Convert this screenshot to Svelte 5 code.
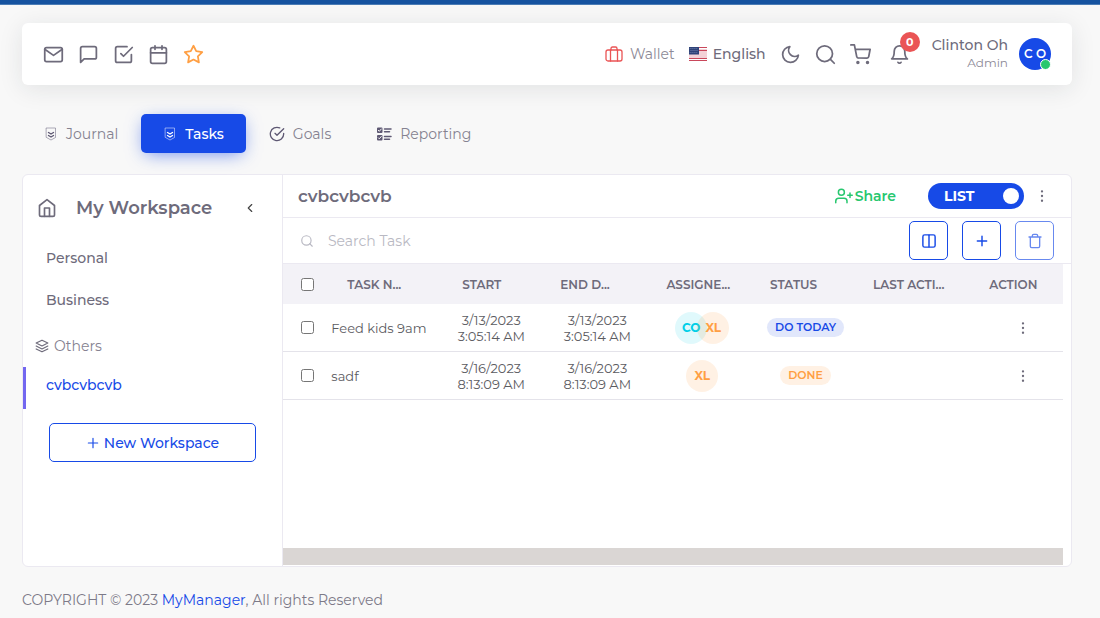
<script>
  let query = $state('');
  let listView = $state(true);

  const tasks = [
    {
      name: 'Feed kids 9am',
      start: ['3/13/2023', '3:05:14 AM'],
      end: ['3/13/2023', '3:05:14 AM'],
      people: [{ initials: 'CO', tone: 'cyan' }, { initials: 'XL', tone: 'orange' }],
      status: 'DO TODAY',
      tone: 'blue'
    },
    {
      name: 'sadf',
      start: ['3/16/2023', '8:13:09 AM'],
      end: ['3/16/2023', '8:13:09 AM'],
      people: [{ initials: 'XL', tone: 'orange' }],
      status: 'DONE',
      tone: 'orange'
    }
  ];
</script>

{#snippet dots()}
  <svg class="i14" viewBox="0 0 24 24"><circle cx="12" cy="12" r="1" /><circle cx="12" cy="4" r="1" /><circle cx="12" cy="20" r="1" /></svg>
{/snippet}

{#snippet badge()}
  <svg class="i14" viewBox="0 0 14 14" stroke-width="1">
    <path d="M2.500 1h9v9.500L7 13l-4.500-2.500z" opacity=".5" />
    <path d="M4.500 5.500 7 7l2.500-1.500M4.500 8.500 7 10l2.500-1.500" stroke-width="1.400" />
  </svg>
{/snippet}

<div class="strip"></div>
<div class="page">
  <header class="navbar">
    <nav class="shortcuts" aria-label="Shortcuts">
      <a href="#mail" aria-label="Email"><svg class="i21" viewBox="0 0 24 24"><path d="M4 4h16c1.100 0 2 .9 2 2v12c0 1.100-.9 2-2 2H4c-1.100 0-2-.9-2-2V6c0-1.100.9-2 2-2z" /><path d="m22 6-10 7L2 6" /></svg></a>
      <a href="#chat" aria-label="Chat"><svg class="i21" viewBox="0 0 24 24"><path d="M21 15a2 2 0 0 1-2 2H7l-4 4V5a2 2 0 0 1 2-2h14a2 2 0 0 1 2 2z" /></svg></a>
      <a href="#todo" aria-label="Todo"><svg class="i21" viewBox="0 0 24 24"><path d="m9 11 3 3L22 4" /><path d="M21 12v7a2 2 0 0 1-2 2H5a2 2 0 0 1-2-2V5a2 2 0 0 1 2-2h11" /></svg></a>
      <a href="#calendar" aria-label="Calendar"><svg class="i21" viewBox="0 0 24 24"><rect x="3" y="4" width="18" height="18" rx="2" /><path d="M16 2v4M8 2v4M3 10h18" /></svg></a>
      <a href="#starred" aria-label="Starred" class="star"><svg class="i21" viewBox="0 0 24 24"><path d="m12 2 3.090 6.260L22 9.270l-5 4.870 1.180 6.880L12 17.770l-6.180 3.250L7 14.140 2 9.270l6.910-1.010z" /></svg></a>
    </nav>
    <div class="tools">
      <a href="#wallet" class="wallet">
        <svg class="i18" viewBox="0 0 18 18" stroke-width="1.300"><rect x="1" y="5" width="16" height="11" rx="2" /><path d="M5.500 16V5M12.500 16V5M6 5V3.500C6 2.500 6.500 2 7.500 2h3c1 0 1.500.5 1.500 1.500V5" /></svg>
        <span>Wallet</span>
      </a>
      <button class="language">
        <svg class="flag" viewBox="0 0 18 14">
          <path fill="#f3d3d8" d="M0 0h18v14H0z" />
          <path fill="#c9485b" d="M10 0h8v1h-8zM0 13h18v1H0zM0 11h18v1H0zM10 3h8v1h-8z" />
          <path fill="#fff" d="M0 12h18v1H0zM10 1h8v1h-8z" />
          <path fill="#2f4379" d="M0 0h10v7.500H0z" />
          <path stroke="#6d7ca8" stroke-width=".6" stroke-dasharray="1 1" d="M1 1.500h8M1.500 3.500h8M1 5.500h8" />
        </svg>
        <span>English</span>
      </button>
      <button aria-label="Dark mode"><svg class="i21" viewBox="0 0 24 24"><path d="M21 12.790A9 9 0 1 1 11.210 3 7 7 0 0 0 21 12.790z" /></svg></button>
      <button aria-label="Search"><svg class="i21" viewBox="0 0 24 24"><circle cx="11" cy="11" r="9" /><path d="m22 22-4.350-4.350" /></svg></button>
      <button aria-label="Cart"><svg class="i21" viewBox="0 0 24 24"><circle cx="9" cy="21" r="1" /><circle cx="20" cy="21" r="1" /><path d="M1 1h4l2.680 13.390a2 2 0 0 0 2 1.610h9.720a2 2 0 0 0 2-1.610L23 6H6" /></svg></button>
      <button aria-label="Notifications" class="bell">
        <svg class="i21" viewBox="0 0 24 24"><path d="M18 8A6 6 0 0 0 6 8c0 7-3 9-3 9h18s-3-2-3-9M13.730 21a2 2 0 0 1-3.460 0" /></svg>
        <span class="count">0</span>
      </button>
      <a href="#profile" class="profile">
        <span class="who"><span class="name">Clinton Oh</span><small>Admin</small></span>
        <span class="avatar">C O<i></i></span>
      </a>
    </div>
  </header>

  <nav class="tabs" aria-label="Sections">
    <a href="#journal">{@render badge()}Journal</a>
    <a href="#tasks" class="active" aria-current="page">{@render badge()}Tasks</a>
    <a href="#goals"><svg class="i16" viewBox="0 0 24 24"><path d="M22 11.080V12a10 10 0 1 1-5.930-9.140" /><path d="M22 4 12 14.010l-3-3" /></svg>Goals</a>
    <a href="#reporting">
      <svg class="i16" viewBox="0 0 16 16" stroke-width="1.500">
        <path fill="currentColor" stroke="none" d="M2 1.500h3.500a1 1 0 0 1 1 1V6a1 1 0 0 1-1 1H2a1 1 0 0 1-1-1V2.500a1 1 0 0 1 1-1zM2 9h3.500a1 1 0 0 1 1 1v3.500a1 1 0 0 1-1 1H2a1 1 0 0 1-1-1V10a1 1 0 0 1 1-1z" />
        <path stroke="#f8f8f8" stroke-width="1" d="m2.300 4.300 1 1 2-2.300M2.300 11.800l1 1 2-2.300" />
        <path d="M8.500 3H15M8.500 5.800h5M8.500 10.500H15M8.500 13.300h5" />
      </svg>Reporting
    </a>
  </nav>

  <main class="panel">
    <aside>
      <div class="side-head">
        <svg class="i20" viewBox="0 0 24 24"><path d="m3 9 9-7 9 7v11a2 2 0 0 1-2 2H5a2 2 0 0 1-2-2z" /><path d="M9 22V12h6v10" /></svg>
        <h2>My Workspace</h2>
        <button aria-label="Collapse sidebar"><svg class="i14" viewBox="0 0 24 24"><path d="m15 18-6-6 6-6" /></svg></button>
      </div>
      <a class="space" href="#personal">Personal</a>
      <a class="space" href="#business">Business</a>
      <div class="group">
        <svg class="i14" viewBox="0 0 24 24"><path d="M12 2 2 7l10 5 10-5zM2 17l10 5 10-5M2 12l10 5 10-5" /></svg>
        Others
      </div>
      <a class="space current" href="#cvbcvbcvb">cvbcvbcvb</a>
      <button class="new"><svg class="i14" viewBox="0 0 24 24"><path d="M12 4v16M4 12h16" /></svg>New Workspace</button>
    </aside>

    <section>
      <div class="title-row">
        <h1>cvbcvbcvb</h1>
        <button class="share">
          <svg class="i18" viewBox="0 0 24 24"><path d="M16 21v-2a4 4 0 0 0-4-4H5a4 4 0 0 0-4 4v2" /><circle cx="8.500" cy="7" r="4" /><path d="M20 8v6M23 11h-6" /></svg>Share
        </button>
        <label class="switch"><input type="checkbox" bind:checked={listView} /><span>LIST</span></label>
        <button aria-label="Workspace menu">{@render dots()}</button>
      </div>

      <div class="search-row">
        <label for="task-search" aria-label="Search Task"><svg class="i14" viewBox="0 0 24 24"><circle cx="11" cy="11" r="8" /><path d="m21 21-4.350-4.350" /></svg></label>
        <input id="task-search" type="text" placeholder="Search Task" bind:value={query} />
        <button class="square" aria-label="Columns"><svg class="i14" viewBox="0 0 24 24" stroke-width="2.500"><rect x="1.500" y="1.500" width="21" height="21" rx="3" /><path d="M12 2v20" /></svg></button>
        <button class="square" aria-label="Add task"><svg class="i14" viewBox="0 0 24 24" stroke-width="2.500"><path d="M12 4v16M4 12h16" /></svg></button>
        <button class="square" aria-label="Delete" disabled><svg class="i16" viewBox="0 0 24 24"><path d="M3 6h18M19 6v14a2 2 0 0 1-2 2H7a2 2 0 0 1-2-2V6M8 6V4a2 2 0 0 1 2-2h4a2 2 0 0 1 2 2v2" /></svg></button>
      </div>

      <div class="sheet">
        <table>
          <thead>
            <tr>
              <th class="pick"><input type="checkbox" aria-label="Select all" /></th>
              <th class="task">TASK N...</th>
              <th class="date start">START</th>
              <th class="date">END D...</th>
              <th class="people">ASSIGNE...</th>
              <th class="status">STATUS</th>
              <th class="last">LAST ACTI...</th>
              <th class="action">ACTION</th>
            </tr>
          </thead>
          <tbody>
            {#each tasks as task}
              <tr>
                <td class="pick"><input type="checkbox" aria-label={task.name} /></td>
                <td class="task">{task.name}</td>
                <td>{task.start[0]}<br />{task.start[1]}</td>
                <td>{task.end[0]}<br />{task.end[1]}</td>
                <td>
                  <div class="stack">
                    {#each task.people as person}<span class="person {person.tone}">{person.initials}</span>{/each}
                  </div>
                </td>
                <td><span class="pill {task.tone}">{task.status}</span></td>
                <td></td>
                <td class="action"><button aria-label="Task menu">{@render dots()}</button></td>
              </tr>
            {/each}
          </tbody>
        </table>
        <div class="track"></div>
      </div>
    </section>
  </main>

  <footer>COPYRIGHT © 2023 <a href="#home">MyManager</a>, All rights Reserved</footer>
</div>

<style>
  :global(body) {
    margin: 0;
    background: #f8f8f8;
    color: #6e6b7b;
    font: 14px/20px Montserrat, Inter, sans-serif;
  }
  * { box-sizing: border-box; }
  a { color: inherit; text-decoration: none; }
  button { padding: 0; border: 0; background: none; color: inherit; font: inherit; cursor: pointer; display: inline-flex; align-items: center; justify-content: center; }
  svg { display: block; flex: none; fill: none; stroke: currentColor; stroke-linecap: round; stroke-linejoin: round; }
  svg:not([stroke-width]) { stroke-width: 2; }
  .i14 { width: 14px; height: 14px; }
  .i16 { width: 16px; height: 16px; }
  .i18 { width: 18px; height: 18px; }
  .i20 { width: 20px; height: 20px; }
  .i21 { width: 21px; height: 21px; }

  .strip { height: 5px; background: #1653a0; border-bottom: 1px solid #4b7cb5; }
  .page { padding: 18px 28px 8px 22px; }

  .navbar { display: flex; align-items: center; justify-content: space-between; height: 62px; padding: 0 21px; border-radius: 6px; background: #fff; box-shadow: 0 4px 24px rgba(34, 41, 47, 0.1); }
  .shortcuts { display: flex; gap: 14px; }
  .star { color: #ff9f43; }
  .tools { display: flex; align-items: center; gap: 14px; }
  .wallet, .language { display: flex; align-items: center; gap: 6px; }
  .wallet { gap: 7px; }
  .wallet svg { color: #ea5455; }
  .wallet span { color: #8d8a97; }
  .language, .name { font-weight: 500; }
  .flag { width: 18px; height: 14px; stroke: none; }
  .bell { position: relative; margin-left: 4px; }
  .count { position: absolute; top: -12px; right: -10px; width: 20px; height: 20px; border-radius: 50%; background: #ea5455; color: #fff; font-size: 11px; font-weight: 700; }
  .profile { display: flex; align-items: center; gap: 11px; margin-left: 8px; }
  .who { display: flex; flex-direction: column; align-items: flex-end; line-height: 18px; }
  .who small { font-size: 12px; color: #8d8a97; }
  .avatar { position: relative; width: 32px; height: 32px; border-radius: 50%; background: #174ae7; color: #fff; font-size: 12px; font-weight: 600; line-height: 32px; text-align: center; }
  .avatar i { position: absolute; right: 0; bottom: 0; width: 11px; height: 11px; border: 1px solid #fff; border-radius: 50%; background: #28c76f; }

  .tabs { display: flex; gap: 1px; margin-top: 29px; color: #858290; }
  .tabs a { display: flex; align-items: center; gap: 8px; height: 39px; padding: 0 22px; border-radius: 5px; }
  .tabs svg { color: #5e5873; }
  .tabs .active { background: #174ae7; color: #fff; font-weight: 500; box-shadow: 0 4px 18px -4px rgba(23, 74, 231, 0.65); }
  .tabs .active svg { color: #fff; }

  .panel { display: flex; min-height: 393px; margin-top: 21px; border: 1px solid #ebe9f1; border-radius: 6px; background: #fff; overflow: hidden; }
  aside { flex: 0 0 260px; border-right: 1px solid #ebe9f1; }
  .side-head { display: flex; align-items: center; height: 62px; padding: 4px 25px 0 14px; }
  .side-head h2 { flex: 1; margin: 0 0 0 19px; font-size: 18px; font-weight: 600; }
  .side-head button { color: #444; }
  .space { display: block; padding: 0 23px; font-size: 14px; font-weight: 500; line-height: 42px; }
  .group { display: flex; align-items: center; gap: 5px; height: 46px; padding: 3px 12px 0; color: #858290; }
  .group svg { color: #6e6b7b; }
  .current { height: 42px; padding-left: 20px; border-left: 3px solid #7367f0; color: #174ae7; line-height: 37px; }
  .new { display: flex; gap: 4px; width: calc(100% - 52px); height: 39px; margin: 14px 26px; border: 1px solid #174ae7; border-radius: 5px; color: #174ae7; font-weight: 500; }

  section { display: flex; flex: 1; flex-direction: column; min-width: 0; }
  .title-row { display: flex; align-items: center; height: 43px; padding: 0 22px 0 15px; border-bottom: 1px solid #ebe9f1; }
  .title-row h1 { flex: 1; margin: 0; font-size: 17px; font-weight: 600; }
  .share { gap: 2px; color: #28c76f; font-weight: 600; }
  .switch { display: flex; align-items: center; justify-content: space-between; width: 96px; height: 26px; margin: 0 11px 0 32px; padding: 0 5px 0 16px; border-radius: 13px; background: #174ae7; color: #fff; font-weight: 700; cursor: pointer; }
  .switch input { order: 1; appearance: none; width: 16px; height: 16px; margin: 0; border-radius: 50%; background: #fff; }
  .search-row { display: flex; align-items: center; gap: 14px; height: 46px; padding: 0 17px; border-bottom: 1px solid #ebe9f1; }
  .search-row label { color: #b9b9c3; }
  .search-row input { flex: 1; min-width: 0; padding: 0; border: 0; outline: 0; background: none; color: inherit; font: inherit; }
  .search-row input::placeholder { color: #b9b9c3; opacity: 1; }
  .square { width: 39px; height: 39px; border: 1px solid #174ae7; border-radius: 5px; color: #174ae7; }
  .square:disabled { opacity: 0.65; }

  .sheet { display: flex; flex: 1; flex-direction: column; padding: 0 8px 1px 0; }
  table { width: 100%; border-spacing: 0; table-layout: fixed; }
  th { height: 40px; padding: 2px 0 0 16px; background: #f3f2f7; font-size: 12px; font-weight: 600; text-align: left; white-space: nowrap; }
  td { height: 48px; padding: 0; border-bottom: 1px solid #e4e3ea; color: #5b5b5f; font-size: 13px; line-height: 16px; text-align: center; }
  .pick { width: 6.2%; padding: 0; text-align: center; }
  .pick input { display: block; width: 13px; height: 13px; margin: 0 auto; }
  .task { width: 13.7%; }
  td.task { text-align: left; }
  .date { width: 13.6%; }
  .start { padding-left: 24px; }
  .people { width: 13.3%; }
  .status { width: 13.2%; }
  .last { width: 14.9%; }
  td.action { padding-left: 10px; }
  td.action button { display: flex; margin: 0 auto; color: #6e6b7b; }
  .stack { display: flex; justify-content: center; }
  .person { width: 32px; height: 32px; border-radius: 50%; font-size: 12px; font-weight: 700; line-height: 32px; }
  .person + .person { margin-left: -10px; }
  .cyan { background: rgba(0, 207, 232, 0.12); color: #00cfe8; }
  .orange { background: rgba(255, 159, 67, 0.14); color: #ff9f43; }
  .blue { background: #e1e7fb; color: #174ae7; }
  .pill { display: inline-block; padding: 0 8px; border-radius: 10px; font-size: 11px; font-weight: 600; line-height: 19px; }
  .track { height: 17px; margin-top: auto; background: #dad6d4; }

  footer { margin-top: 23px; color: #7d7a88; }
  footer a { color: #174ae7; }
</style>
